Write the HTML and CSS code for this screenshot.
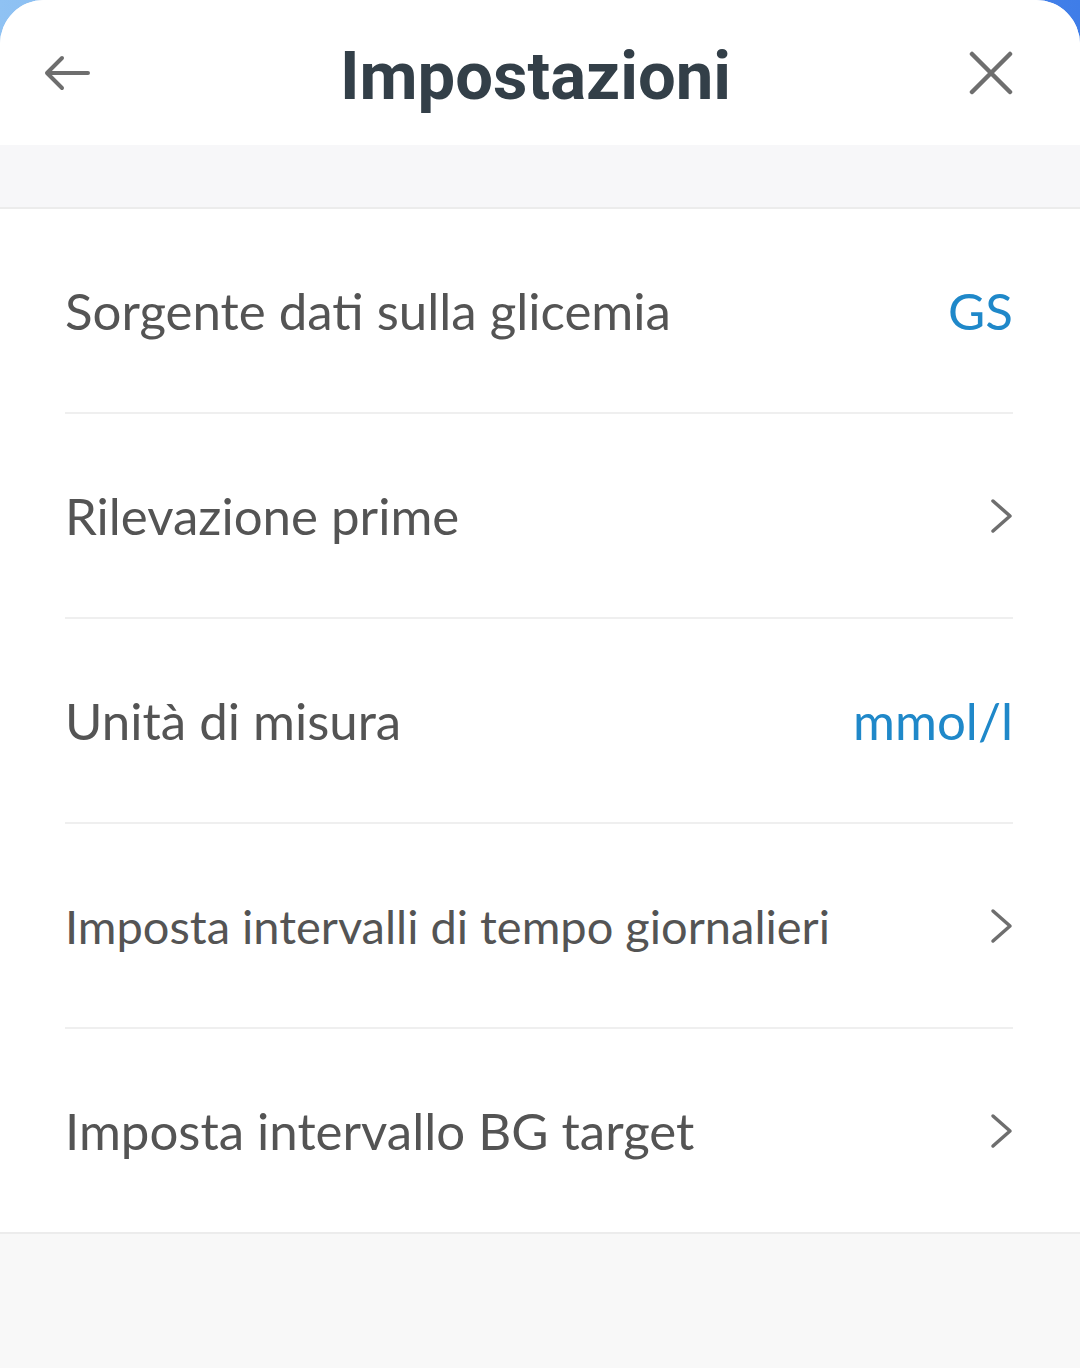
FILE: index.html
```html
<!DOCTYPE html>
<html lang="en">
<head>
  <meta charset="UTF-8">
  <meta name="viewport" content="width=device-width, initial-scale=1.0">
  <title>Impostazioni</title>
  <link rel="stylesheet" href="styles.css">
</head>
<body>

  <div class="sheet">
    <header class="sheet-header">
      <button class="icon-btn" type="button" aria-label="Indietro">
        <svg width="48" height="36" viewBox="0 0 48 36">
          <path d="M44 18H4M18 3L3 18l15 15" fill="none" stroke="#6e6e6e" stroke-width="4" stroke-linecap="round" stroke-linejoin="round"/>
        </svg>
      </button>
      <h1>Impostazioni</h1>
      <button class="icon-btn" type="button" aria-label="Chiudi">
        <svg width="44" height="44" viewBox="0 0 44 44">
          <path d="M3 3l38 38M41 3L3 41" fill="none" stroke="#6e6e6e" stroke-width="4.5" stroke-linecap="round"/>
        </svg>
      </button>
    </header>

    <div class="spacer"></div>

    <ul class="settings-list">
      <li class="setting-item">
        <span class="setting-name">Sorgente dati sulla glicemia</span>
        <span class="setting-value">GS</span>
      </li>
      <li class="setting-item">
        <span class="setting-name">Rilevazione prime</span>
        <span class="chevron">
          <svg width="26" height="36" viewBox="0 0 26 36">
            <path d="M4 3l17 15L4 33" fill="none" stroke="#6e6e6e" stroke-width="3.5" stroke-linecap="round" stroke-linejoin="round"/>
          </svg>
        </span>
      </li>
      <li class="setting-item">
        <span class="setting-name">Unità di misura</span>
        <span class="setting-value">mmol/l</span>
      </li>
      <li class="setting-item">
        <span class="setting-name setting-name-long">Imposta intervalli di tempo giornalieri</span>
        <span class="chevron">
          <svg width="26" height="36" viewBox="0 0 26 36">
            <path d="M4 3l17 15L4 33" fill="none" stroke="#6e6e6e" stroke-width="3.5" stroke-linecap="round" stroke-linejoin="round"/>
          </svg>
        </span>
      </li>
      <li class="setting-item">
        <span class="setting-name">Imposta intervallo BG target</span>
        <span class="chevron">
          <svg width="26" height="36" viewBox="0 0 26 36">
            <path d="M4 3l17 15L4 33" fill="none" stroke="#6e6e6e" stroke-width="3.5" stroke-linecap="round" stroke-linejoin="round"/>
          </svg>
        </span>
      </li>
    </ul>
  </div>

</body>
</html>
```

FILE: styles.css
```css
html, body {
  height: 100%;
}

body {
  margin: 0;
  background: linear-gradient(90deg, #8fc2f3, #3f7de8);
  font-family: Lato, "Open Sans", sans-serif;
}

.sheet {
  min-height: 100%;
  background-color: #f8f8f8;
  border-radius: 44px 44px 0 0;
  overflow: hidden;
}

.sheet-header {
  height: 145px;
  display: flex;
  align-items: center;
  justify-content: space-between;
  padding: 0 67px 0 44px;
  background-color: #fff;
}

.sheet-header h1 {
  margin: 0 0 -6px 10px;
  font-family: Roboto, "Liberation Sans", sans-serif;
  font-weight: 700;
  font-size: 67px;
  color: #333f48;
}

.icon-btn {
  display: flex;
  padding: 0;
  border: none;
  background: none;
  cursor: pointer;
}

.spacer {
  height: 62px;
  background-color: #f7f7f9;
  border-bottom: 2px solid #ececec;
}

.settings-list {
  list-style: none;
  margin: 0;
  padding: 0 67px 0 65px;
  background-color: #fff;
  border-bottom: 2px solid #ececec;
}

.setting-item {
  display: flex;
  align-items: center;
  justify-content: space-between;
  height: 203px;
  border-bottom: 2px solid #efefef;
}

.setting-item:last-child {
  border-bottom: none;
}

.setting-name {
  font-size: 51px;
  color: #545454;
}

.setting-name-long {
  font-size: 47px;
}

.setting-value {
  font-size: 51px;
  color: #1f88c9;
}

.chevron {
  display: flex;
  margin-right: -2px;
}
```
